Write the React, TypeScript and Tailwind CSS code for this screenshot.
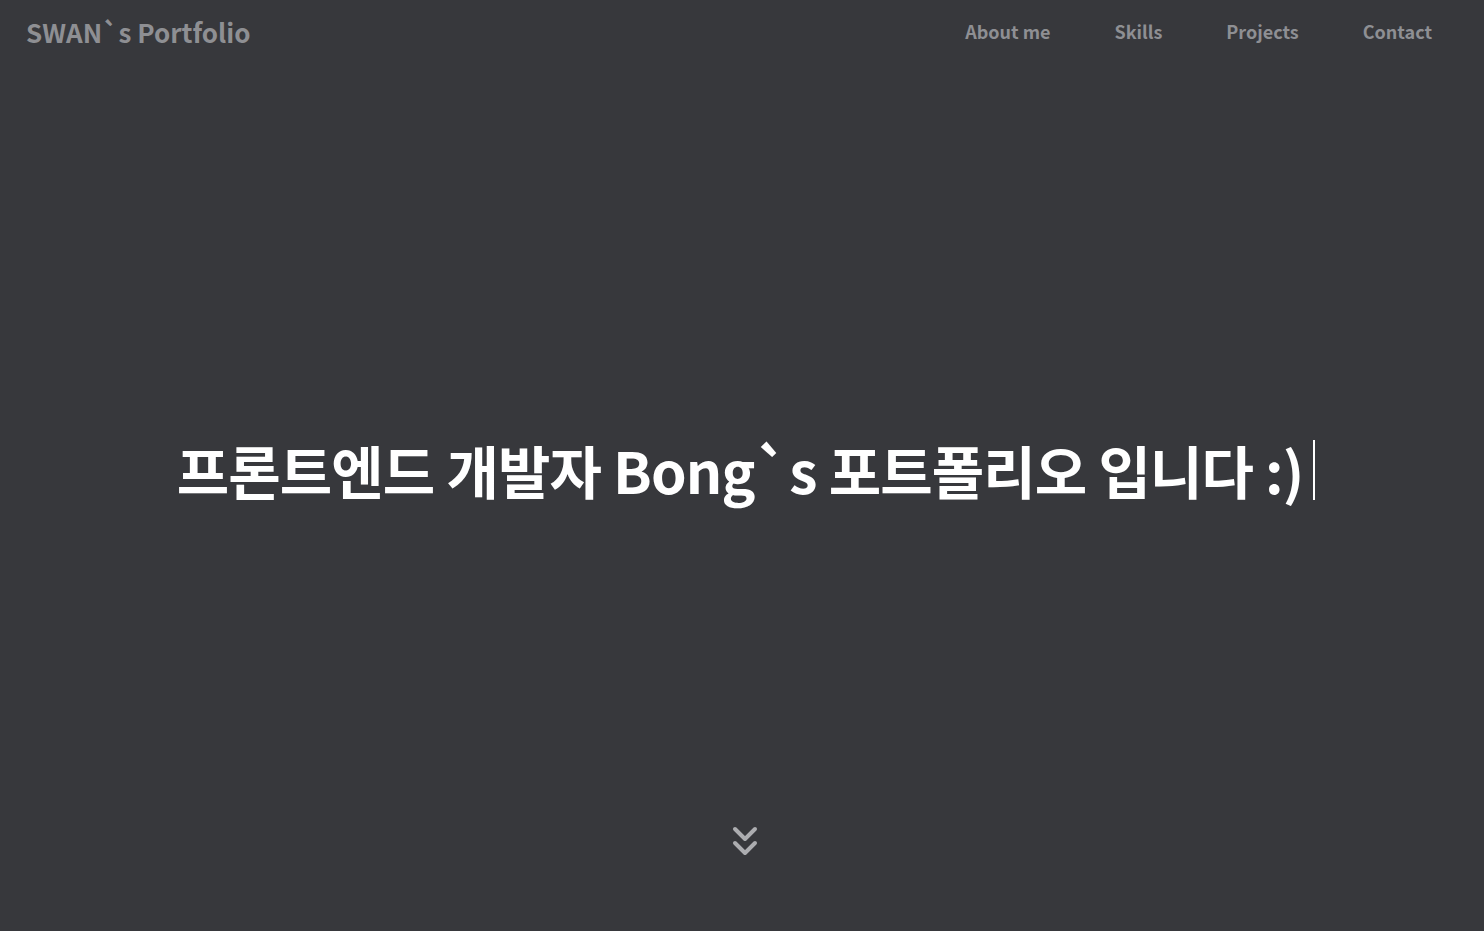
import React from 'react';
import { ChevronsDown } from 'lucide-react';

const navItems = ['About me', 'Skills', 'Projects', 'Contact'];

const App = () => {
  return (
    <div
      className="relative h-[931px] w-full overflow-hidden bg-[#37383c]"
      style={{ fontFamily: '"Noto Sans CJK KR", "Noto Sans", sans-serif' }}
    >
      {/* Header */}
      <header className="absolute left-0 right-0 top-0 z-10 flex h-[62px] items-center justify-between pl-[26px] pr-[52px]">
        <h1 className="text-[26px] font-bold text-[#8e8f93]">SWAN`s Portfolio</h1>
        <nav className="flex items-center gap-[64px]">
          {navItems.map((item) => (
            <a key={item} className="text-[18px] font-bold tracking-[0px] text-[#8e8f93]">
              {item}
            </a>
          ))}
        </nav>
      </header>

      {/* Hero */}
      <section className="flex h-full w-full items-center justify-center pt-[8px] pl-[8px]">
        <h2 className="flex items-center text-[57px] font-bold tracking-[-0.9px] text-white">
          프론트엔드 개발자 Bong`s 포트폴리오 입니다 :)
          <span className="ml-[10px] inline-block h-[60px] w-[2px] bg-white" />
        </h2>
      </section>

      <div className="absolute bottom-[66px] left-0 right-0 flex justify-center pl-[6px]">
        <ChevronsDown size={48} strokeWidth={2} className="text-[#acadb0]" />
      </div>
    </div>
  );
};

export default App;
